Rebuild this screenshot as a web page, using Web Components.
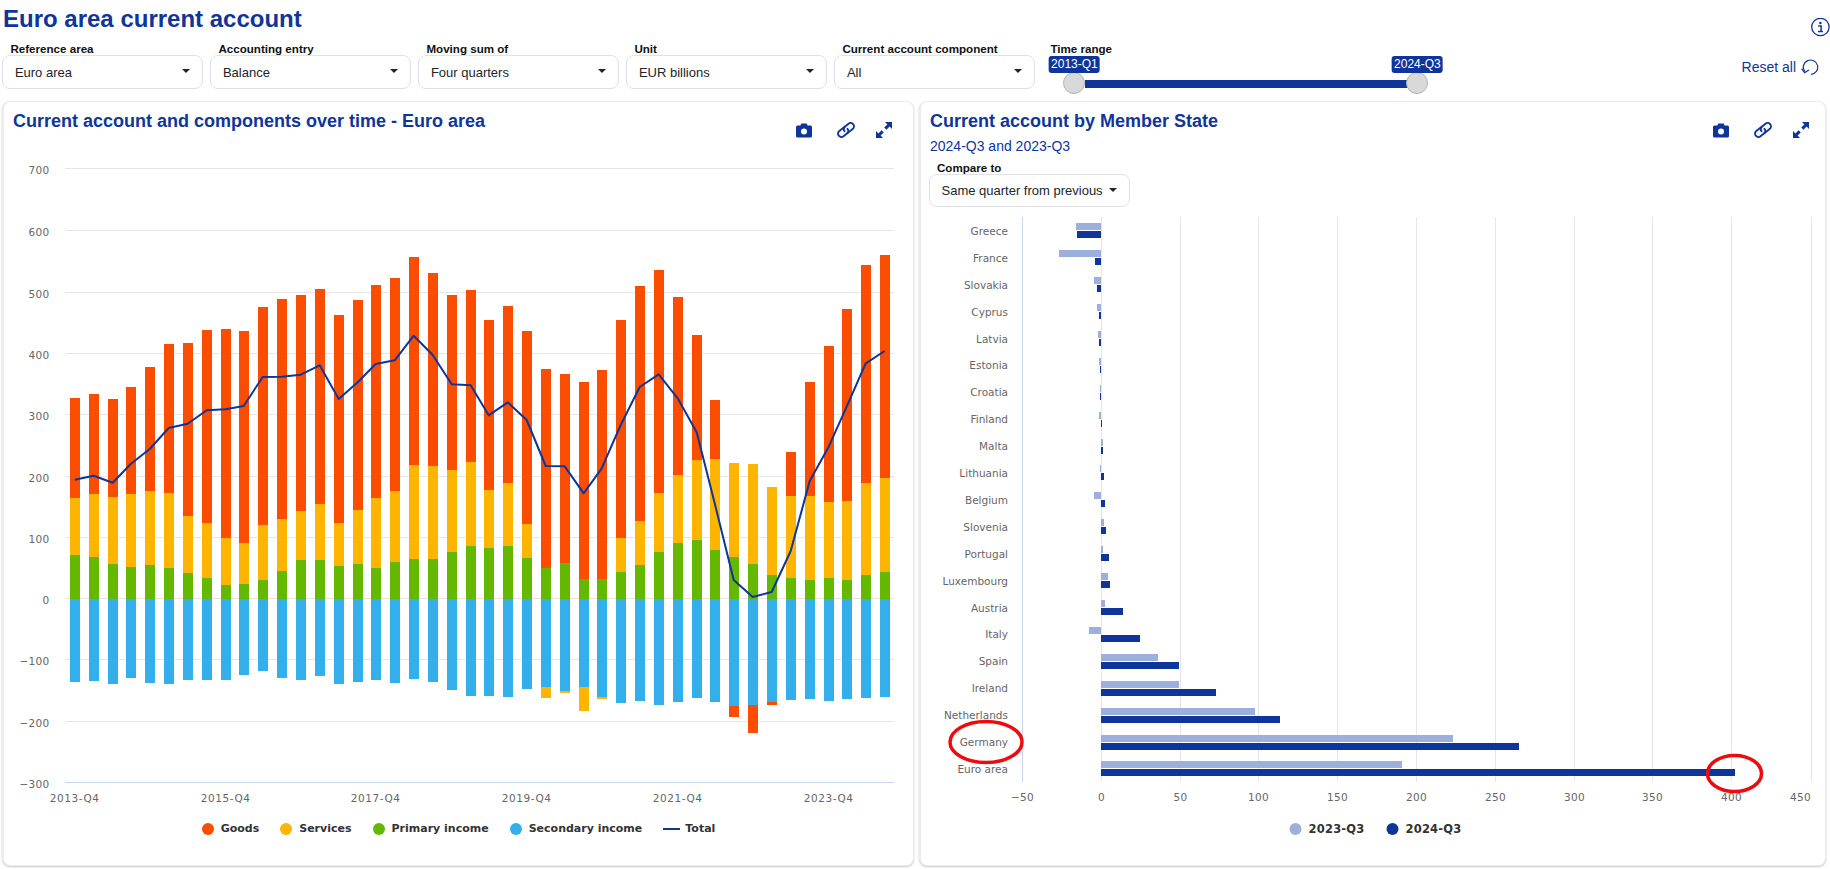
<!DOCTYPE html>
<html lang="en">
<head>
<meta charset="utf-8">
<title>Euro area current account</title>
<style>
html,body{margin:0;padding:0;background:#fff;font-family:"Liberation Sans",Arial,sans-serif;color:#212529}
body{width:1830px;height:869px;overflow:hidden}
</style>
</head>
<body>
<ecb-page>
  <span slot="title">Euro area current account</span>
  <ecb-select slot="filters" label="Reference area" value="Euro area"></ecb-select>
  <ecb-select slot="filters" label="Accounting entry" value="Balance"></ecb-select>
  <ecb-select slot="filters" label="Moving sum of" value="Four quarters"></ecb-select>
  <ecb-select slot="filters" label="Unit" value="EUR billions"></ecb-select>
  <ecb-select slot="filters" label="Current account component" value="All"></ecb-select>
  <ecb-range slot="filters" label="Time range" from="2013-Q1" to="2024-Q3"></ecb-range>
  <ecb-reset slot="filters">Reset all</ecb-reset>

  <ecb-card slot="left" heading="Current account and components over time - Euro area" style="--tools-right:21px">
    <ecb-stack-chart></ecb-stack-chart>
    <ecb-legend style="--gap:21px">
      <ecb-key color="#fa4d00">Goods</ecb-key>
      <ecb-key color="#fdb502">Services</ecb-key>
      <ecb-key color="#65b800">Primary income</ecb-key>
      <ecb-key color="#33b0ec">Secondary income</ecb-key>
      <ecb-key color="#10359a" kind="line">Total</ecb-key>
    </ecb-legend>
  </ecb-card>

  <ecb-card slot="right" heading="Current account by Member State" subheading="2024-Q3 and 2023-Q3" style="--tools-right:16px">
    <ecb-select slot="controls" label="Compare to" value="Same quarter from previous" compact></ecb-select>
    <ecb-bar-chart></ecb-bar-chart>
    <ecb-legend style="--shift:2.5px;--key-size:11.5px;--key-track:.2px">
      <ecb-key color="#9cb0db">2023-Q3</ecb-key>
      <ecb-key color="#10359a">2024-Q3</ecb-key>
    </ecb-legend>
  </ecb-card>
</ecb-page>

<script>
const BLUE = '#10359a';

class EcbPage extends HTMLElement {
  constructor(){
    super();
    this.attachShadow({mode:'open'}).innerHTML = `
    <style>
      :host{display:block;width:1830px;height:869px;box-sizing:border-box}
      header{display:flex;justify-content:space-between;align-items:flex-start;height:43px;padding-left:3px}
      h1{margin:0;font:700 24px/38px "Liberation Sans",Arial,sans-serif;color:${BLUE}}
      .info{margin:18px 0 0 0;display:block;width:20px;height:20px}
      .filters{display:flex;align-items:flex-start;gap:7px;height:58px;padding:0 11px 0 2.4px}
      .cards{display:grid;grid-template-columns:912px 907px;gap:5px;padding-left:2px;height:765px}
    </style>
    <header>
      <h1><slot name="title"></slot></h1>
      <svg class="info" viewBox="0 0 20 20" fill="none" stroke="${BLUE}">
        <circle cx="10.4" cy="9" r="8.7" stroke-width="1.3"/>
        <circle cx="10.4" cy="5" r="1.3" fill="${BLUE}" stroke="none"/>
        <path d="M8.2 7.9h2.9v5.4M8 13.6h5" stroke-width="1.5"/>
      </svg>
    </header>
    <div class="filters"><slot name="filters"></slot></div>
    <div class="cards"><slot name="left"></slot><slot name="right"></slot></div>`;
  }
}

class EcbSelect extends HTMLElement {
  constructor(){
    super();
    const label = this.getAttribute('label'), value = this.getAttribute('value');
    this.attachShadow({mode:'open'}).innerHTML = `
    <style>
      :host{display:block;width:201px;font-family:"Liberation Sans",Arial,sans-serif}
      label{display:block;font:700 11.6px/12px "Liberation Sans",Arial,sans-serif;color:#111;padding-left:8px;white-space:nowrap;height:12px}
      .box{box-sizing:border-box;height:34px;border:1px solid #dee2e6;border-radius:8px;background:#fff;display:flex;align-items:center;
        justify-content:space-between;padding:0 12px 0 11.5px;font-size:13px;color:#212529;white-space:nowrap}
      .caret{width:0;height:0;border-left:4px solid transparent;border-right:4px solid transparent;border-top:4.5px solid #212529;margin-top:-2px}
      :host([compact]) .box{height:33px}
      :host([compact]){margin-left:-1px}
    </style>
    <label>${label}</label>
    <div class="box" role="combobox"><span>${value}</span><i class="caret"></i></div>`;
  }
}

class EcbRange extends HTMLElement {
  constructor(){
    super();
    this.attachShadow({mode:'open'}).innerHTML = `
    <style>
      :host{display:block;width:380px;margin-left:8px;font-family:"Liberation Sans",Arial,sans-serif}
      label{display:block;font:700 11.6px/12px "Liberation Sans",Arial,sans-serif;color:#111;height:12px}
      .track{position:relative;width:324px;height:8px;margin:25px 0 0 35px;background:${BLUE}}
      .handle{position:absolute;top:-8px;width:22px;height:22px;box-sizing:border-box;border-radius:50%;background:#d9d9d9;border:1px solid #b3b3b3}
      .h1{left:-22px}.h2{left:321px}
      .tip{position:absolute;bottom:100%;left:50%;transform:translateX(-50%);margin-bottom:0;background:${BLUE};color:#fff;font-size:12px;
        line-height:17px;height:17px;padding:0 2px;border-radius:3px;white-space:nowrap}
    </style>
    <label>${this.getAttribute('label')}</label>
    <div class="track">
      <div class="handle h1"><span class="tip">${this.getAttribute('from')}</span></div>
      <div class="handle h2"><span class="tip">${this.getAttribute('to')}</span></div>
    </div>`;
  }
}

class EcbReset extends HTMLElement {
  constructor(){
    super();
    this.attachShadow({mode:'open'}).innerHTML = `
    <style>
      :host{display:flex;align-items:center;gap:5px;margin:14px 0 0 auto;height:20px;color:${BLUE};font:14px/20px "Liberation Sans",Arial,sans-serif;white-space:nowrap}
      svg{display:block}
    </style>
    <slot></slot>
    <svg width="18" height="17" viewBox="0 0 18 17" fill="none" stroke="${BLUE}" stroke-width="1.2">
      <path d="M3.6 12.3A7.2 7.2 0 1 1 10 15.4"/>
      <path d="M0.6 9.6 3.6 13.6 8 11"/>
    </svg>`;
  }
}

class EcbTools extends HTMLElement {
  constructor(){
    super();
    this.attachShadow({mode:'open'}).innerHTML = `
    <style>
      :host{display:flex;align-items:center;height:16px;margin-top:11px}
      svg{display:block}
      .a{margin-right:24px}.b{margin-right:20px}
    </style>
    <svg class="a" width="16" height="15" viewBox="0 0 16 15">
      <path fill="${BLUE}" d="M1.6 2.4H4.4L5.3 .4H10.7L11.6 2.4H14.4A1.6 1.6 0 0 1 16 4V13A1.6 1.6 0 0 1 14.4 14.6H1.6A1.6 1.6 0 0 1 0 13V4A1.6 1.6 0 0 1 1.6 2.4Z"/>
      <circle cx="8" cy="8.4" r="3" fill="#fff"/>
    </svg>
    <svg class="b" width="20" height="16" viewBox="0 0 20 16" fill="none" stroke="${BLUE}" stroke-width="1.9" stroke-linecap="round">
      <g transform="rotate(-38 10 8)">
        <path d="M11 4.6H4.2A3.4 3.4 0 0 0 4.2 11.4H8.5A3.4 3.4 0 0 0 11.9 8"/>
        <path d="M9 11.4H15.8A3.4 3.4 0 0 0 15.8 4.6H11.5A3.4 3.4 0 0 0 8.1 8"/>
      </g>
    </svg>
    <svg width="16" height="16" viewBox="0 0 16 16">
      <path fill="${BLUE}" d="M16 0V7L13.6 4.6 10.4 7.8 8.2 5.6 11.4 2.4 9 0ZM0 16V9L2.4 11.4 5.6 8.2 7.8 10.4 4.6 13.6 7 16Z"/>
    </svg>`;
  }
}

class EcbCard extends HTMLElement {
  constructor(){
    super();
    const sub = this.getAttribute('subheading');
    this.attachShadow({mode:'open'}).innerHTML = `
    <style>
      :host{display:flex;flex-direction:column;box-sizing:border-box;height:765px;background:#fff;border:1px solid #ececec;border-left-width:2px;border-radius:8px;
        box-shadow:0 1px 2px rgba(0,0,0,.22);font-family:"Liberation Sans",Arial,sans-serif;overflow:hidden}
      .head{display:flex;justify-content:space-between;align-items:flex-start;padding:9px var(--tools-right,20px) 0 9px;min-height:39px;flex:none}
      h2{margin:0;font:700 18px/20px "Liberation Sans",Arial,sans-serif;color:${BLUE}}
      p{margin:6px 0 0;font-size:14px;line-height:18px;color:${BLUE}}
      .ctl{margin:7px 0 3px}
      .empty{display:none}
    </style>
    <div class="head">
      <div>
        <h2>${this.getAttribute('heading')}</h2>
        ${sub ? `<p>${sub}</p>` : ''}
        <div class="ctl ${sub ? '' : 'empty'}"><slot name="controls"></slot></div>
      </div>
      <ecb-tools></ecb-tools>
    </div>
    <slot></slot>`;
  }
}

class EcbLegend extends HTMLElement {
  constructor(){
    super();
    this.attachShadow({mode:'open'}).innerHTML = `
    <style>:host{display:flex;justify-content:center;align-items:center;gap:var(--gap,22px);height:18px;transform:translateX(var(--shift,0))}</style>
    <slot></slot>`;
  }
}

class EcbKey extends HTMLElement {
  constructor(){
    super();
    const c = this.getAttribute('color'), line = this.getAttribute('kind')==='line';
    this.attachShadow({mode:'open'}).innerHTML = `
    <style>
      :host{display:flex;align-items:center;gap:${line?5:7}px;font:700 var(--key-size,11px)/18px "DejaVu Sans",Verdana,sans-serif;letter-spacing:var(--key-track,0);color:#333;white-space:nowrap}
      i{display:block;flex:none}
      .dot{width:12px;height:12px;border-radius:50%;background:${c}}
      .line{width:17px;height:2px;background:${c}}
    </style>
    <i class="${line?'line':'dot'}"></i><slot></slot>`;
  }
}

const AXIS = 'font-family="DejaVu Sans,Verdana,sans-serif" font-size="10.5" fill="#666"';
const TRACK = 'letter-spacing=".3"';

class EcbStackChart extends HTMLElement {
  constructor(){
    super();
    const z3 = v => 350 + v/3;
    const z5 = v => 600 + v/3;
    // left edge of each quarter's bar
    const left = [70,89,108,126,145,164,183,202,221,239,258,277,296,315,334,353,371,390,409,428,447,466,484,503,522,541,560,579,597,616,635,654,673,692,710,729,748,767,786,805,824,842,861,880];
    // pixel levels of each stacked segment, read quarter by quarter
    const sec = [246,243,252,234,249,252,240,240,240,225,213,234,240,228,252,246,240,249,237,246,270,288,288,291,267,261,273,261,291,309,303,315,306,294,306,318,315,306,300,297,303,297,294,291].map(z5);
    const gre = [615,621,642,651,645,654,669,684,705,702,690,663,630,630,648,642,654,636,627,627,606,588,594,588,624,654,639,687,687,666,645,606,579,570,600,621,642,675,684,690,684,690,675,666].map(z3);
    const yel = [444,432,441,432,423,429,498,519,564,579,525,507,483,462,519,480,444,423,345,348,360,336,420,399,522,null,null,null,null,564,513,429,375,330,327,339,342,411,438,438,456,453,399,384].map(v=>v===null?null:z3(v));
    const ora = [398,394,399,387,367,344,343,330,329,331,307,299,295,289,315,300,285,278,257,273,295,290,320,306,331,369,374,382,370,320,286,270,297,335,400,null,null,null,452,382,346,309,265,255];
    const negY = {25:z5(294),26:z5(279),27:z5(333),28:z5(297)};
    const negO = {35:z5(351),36:z5(399),37:z5(315)};
    const tot = [389,377,398,342,297,234,221,181,178,168,81,80,74,46,147,97,42,31,-43,15,103,106,196,157,210,348,349,430,355,225,111,73,145,247,460,690,741,726,603,393,290,170,40,3].map(z3);
    const Y0 = 599, X0 = 65, X1 = 894, W = 10;
    const cx = i => left[i] + 4.7;
    let s = '';
    [[700,168.5],[600,230.5],[500,292.5],[400,353.5],[300,414.5],[200,476.5],[100,537.5],[0,598.5],[-100,659.5],[-200,721.5],[-300,782.5]].forEach(([v,y])=>{
      s += `<line x1="${X0}" x2="${X1}" y1="${y}" y2="${y}" stroke="${v===-300?'#ccd6eb':'#e6e6e6'}" stroke-width="1"/>`;
      s += `<text x="49.5" y="${y+1}" text-anchor="end" dominant-baseline="central" ${AXIS} ${TRACK}>${String(v).replace('-','\u2212')}</text>`;
    });
    const rect = (i,a,b,c) => `<rect x="${left[i]}" y="${Math.round(Math.min(a,b))}" width="${W}" height="${Math.round(Math.abs(b-a))}" fill="${c}"/>`;
    for(let i=0;i<44;i++){
      s += rect(i,Y0,sec[i],'#33b0ec');
      s += rect(i,Y0,gre[i],'#65b800');
      if(yel[i]!==null){
        s += rect(i,gre[i],yel[i],'#fdb502');
        if(ora[i]!==null) s += rect(i,yel[i],ora[i],'#fa4d00');
      } else {
        s += rect(i,gre[i],ora[i],'#fa4d00');
      }
      if(negY[i]) s += rect(i,sec[i],negY[i],'#fdb502');
      if(negO[i]) s += rect(i,sec[i],negO[i],'#fa4d00');
    }
    s += `<polyline fill="none" stroke="${BLUE}" stroke-width="2" stroke-linejoin="round" points="${tot.map((y,i)=>cx(i).toFixed(1)+','+y.toFixed(1)).join(' ')}"/>`;
    ['2013-Q4','2015-Q4','2017-Q4','2019-Q4','2021-Q4','2023-Q4'].forEach((t,k)=>{
      s += `<text x="${cx(k*8).toFixed(1)}" y="797.5" text-anchor="middle" dominant-baseline="central" ${AXIS} letter-spacing=".55">${t}</text>`;
    });
    this.attachShadow({mode:'open'}).innerHTML = `
    <style>:host{display:block;flex:none;height:670px;margin-left:-2px}svg{display:block}</style>
    <svg width="912" height="670" viewBox="2 150 912 670">${s}</svg>`;
  }
}

class EcbBarChart extends HTMLElement {
  constructor(){
    super();
    const z = v => 920 + v/3, r = v => 1370 + v/3;
    const rows = [
      ['Greece',z(468),z(471)],['France',z(417),z(525)],['Slovakia',z(522),z(531)],['Cyprus',z(531),z(537)],
      ['Latvia',z(534),z(537)],['Estonia',z(537),z(540)],['Croatia',z(540),z(540)],['Finland',z(537),z(546)],
      ['Malta',z(549),z(549)],['Lithuania',z(540),z(552)],['Belgium',z(522),z(555)],['Slovenia',z(552),z(558)],
      ['Portugal',z(549),z(567)],['Luxembourg',z(564),z(570)],['Austria',z(555),z(609)],['Italy',z(507),z(660)],
      ['Spain',z(714),z(777)],['Ireland',z(777),z(888)],['Netherlands',z(1005),z(1080)],['Germany',r(249),r(447)],['Euro area',r(96),r(1095)]
    ];
    const ZERO = 1101, TOP = 217, BOT = 782, ROW = (BOT-TOP)/21;
    let s = '';
    [[-50,1022.5],[0,1101.5],[50,1180.5],[100,1258.5],[150,1337.5],[200,1416.5],[250,1495.5],[300,1574.5],[350,1652.5],[400,1731.5],[450,1811.5]].forEach(([v,x])=>{
      s += `<line x1="${x}" x2="${x}" y1="${TOP}" y2="${BOT}" stroke="${v===-50?'#ccd6eb':'#e6e6e6'}" stroke-width="1"/>`;
      s += `<text x="${v===450?1800.5:x}" y="797" text-anchor="middle" dominant-baseline="central" ${AXIS} ${TRACK}>${String(v).replace('-','\u2212')}</text>`;
    });
    const bar = (x,y,c) => `<rect x="${Math.min(x,ZERO).toFixed(1)}" y="${y}" width="${Math.abs(x-ZERO).toFixed(1)}" height="7" fill="${c}"/>`;
    rows.forEach(([n,a,b],i)=>{
      const c = TOP + ROW*(i+.5);
      s += bar(a,Math.round(c-7.1),'#9cb0db') + bar(b,Math.round(c+.9),BLUE);
      s += `<text x="1008" y="${(c+.4).toFixed(1)}" text-anchor="end" dominant-baseline="central" ${AXIS}>${n}</text>`;
    });
    s += `<ellipse cx="986" cy="742" rx="36" ry="20.5" fill="none" stroke="#ee0a0f" stroke-width="3.5"/>`;
    s += `<ellipse cx="1734.5" cy="773.5" rx="27" ry="18" fill="none" stroke="#ee0a0f" stroke-width="3.5"/>`;
    this.attachShadow({mode:'open'}).innerHTML = `
    <style>:host{display:block;flex:none;height:610px;margin-left:-2px}svg{display:block}</style>
    <svg width="907" height="610" viewBox="919 210 907 610">${s}</svg>`;
  }
}

customElements.define('ecb-page', EcbPage);
customElements.define('ecb-select', EcbSelect);
customElements.define('ecb-range', EcbRange);
customElements.define('ecb-reset', EcbReset);
customElements.define('ecb-tools', EcbTools);
customElements.define('ecb-card', EcbCard);
customElements.define('ecb-legend', EcbLegend);
customElements.define('ecb-key', EcbKey);
customElements.define('ecb-stack-chart', EcbStackChart);
customElements.define('ecb-bar-chart', EcbBarChart);
</script>
</body>
</html>
